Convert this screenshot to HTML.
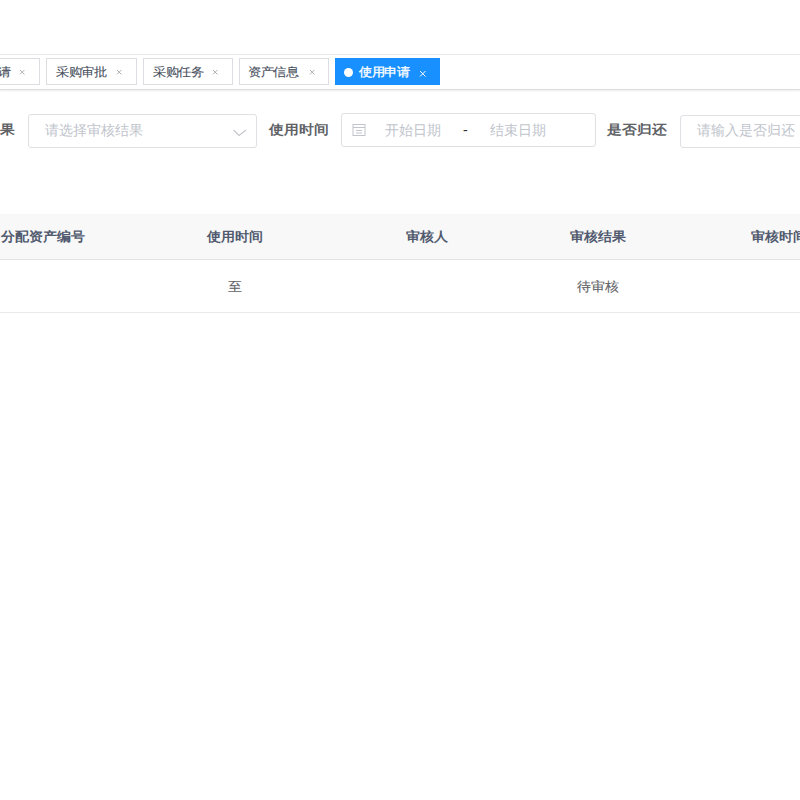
<!DOCTYPE html>
<html><head><meta charset="utf-8">
<style>
html,body{margin:0;padding:0;width:800px;height:800px;overflow:hidden;background:#fff;font-family:"Liberation Sans",sans-serif;}
.abs{position:absolute;}
#tagsbar{position:absolute;left:0;top:53.5px;width:800px;height:36.5px;background:#fff;border-top:1.5px solid #e9e9ea;border-bottom:1px solid #dcdde0;box-shadow:0 1px 2px 0 rgba(0,0,0,.08);box-sizing:border-box;}
.tag{position:absolute;top:57.5px;height:27px;box-sizing:border-box;border:1px solid #dddee2;background:#fff;color:#495060;font-size:13px;line-height:25px;white-space:nowrap;}
.tag .t{position:absolute;top:0.3px;-webkit-text-stroke:0.12px #495060;transform:scale(0.98,0.89);transform-origin:0 50%;}
.tag.active{background:#1890ff;border-color:#1890ff;color:#fff;}
.tag.active .t{-webkit-text-stroke:0.35px #fff;}
.dot{position:absolute;width:8px;height:8px;border-radius:50%;background:#fff;}
.label{position:absolute;font-size:15px;font-weight:bold;color:#606266;line-height:20px;white-space:nowrap;transform:scaleY(0.88);transform-origin:0 50%;}
.inp{position:absolute;box-sizing:border-box;border:1px solid #dfe0e4;border-radius:3px;background:#fff;}
.ph{position:absolute;font-size:14px;color:#c0c4cc;line-height:20px;white-space:nowrap;}
#thead{position:absolute;left:0;top:213.5px;width:800px;height:46.5px;background:#f8f8f9;border-bottom:1px solid #e2e3e5;box-sizing:border-box;}
#row{position:absolute;left:0;top:260px;width:800px;height:52.5px;border-bottom:1px solid #e8e9eb;box-sizing:border-box;}
.th{position:absolute;font-size:14px;font-weight:bold;color:#515a6e;line-height:20px;white-space:nowrap;transform:translateX(-50%) scaleY(0.93);}
.td{position:absolute;font-size:14px;color:#606266;-webkit-text-stroke:0.12px #606266;line-height:20px;white-space:nowrap;transform:translateX(-50%) scaleY(0.93);}
</style></head><body><div id="wrap" style="position:absolute;left:0;top:0;width:800px;height:800px">
<div id="tagsbar"></div>

<div class="tag" style="left:-40px;width:80px"><span class="t" style="left:37px">请</span></div>
<div class="tag" style="left:46px;width:91px"><span class="t" style="left:9px">采购审批</span></div>
<div class="tag" style="left:143px;width:90px"><span class="t" style="left:9px">采购任务</span></div>
<div class="tag" style="left:239px;width:90px"><span class="t" style="left:8px">资产信息</span></div>
<div class="tag active" style="left:335px;width:105px"><span class="dot" style="left:8px;top:9.5px;width:9px;height:9px"></span><span class="t" style="left:23px">使用申请</span></div>


<svg class="abs" style="left:19.3px;top:69.0px" width="6.4" height="6.4" viewBox="0 0 6.4 6.4"><path d="M1 1L5.4 5.4M5.4 1L1 5.4" stroke="#a3a6ad" stroke-width="0.9" fill="none"/></svg><svg class="abs" style="left:116.3px;top:69.3px" width="6.4" height="6.4" viewBox="0 0 6.4 6.4"><path d="M1 1L5.4 5.4M5.4 1L1 5.4" stroke="#a3a6ad" stroke-width="0.9" fill="none"/></svg><svg class="abs" style="left:212.3px;top:69.3px" width="6.4" height="6.4" viewBox="0 0 6.4 6.4"><path d="M1 1L5.4 5.4M5.4 1L1 5.4" stroke="#a3a6ad" stroke-width="0.9" fill="none"/></svg><svg class="abs" style="left:308.5px;top:69.3px" width="6.4" height="6.4" viewBox="0 0 6.4 6.4"><path d="M1 1L5.4 5.4M5.4 1L1 5.4" stroke="#a3a6ad" stroke-width="0.9" fill="none"/></svg><svg class="abs" style="left:419px;top:69.7px" width="7.5" height="7.5" viewBox="0 0 7.5 7.5"><path d="M1 1L6.5 6.5M6.5 1L1 6.5" stroke="#ffffff" stroke-width="1" fill="none"/></svg>
<div class="label" style="left:0px;top:120.1px">果</div>
<div class="inp" style="left:28px;top:114px;width:229px;height:33.5px"></div>
<div class="ph" style="left:45px;top:120px">请选择审核结果</div>
<svg class="abs" style="left:232.5px;top:129px" width="14" height="8" viewBox="0 0 14 8"><path d="M0.6 1 L6 6.4 L13 1" fill="none" stroke="#c3c5ca" stroke-width="1.1"/></svg>

<div class="label" style="left:268.5px;top:120.1px">使用时间</div>
<div class="inp" style="left:340.5px;top:113px;width:255px;height:34px"></div>
<svg class="abs" style="left:352px;top:122.5px" width="14" height="13" viewBox="0 0 14 13"><rect x="1" y="1.5" width="12" height="11" fill="none" stroke="#c0c4cc" stroke-width="1"/><line x1="1" y1="4.5" x2="13" y2="4.5" stroke="#c0c4cc"/><line x1="4" y1="7.5" x2="10" y2="7.5" stroke="#c0c4cc"/><line x1="4" y1="10" x2="10" y2="10" stroke="#c0c4cc"/></svg>
<div class="ph" style="left:385px;top:120px">开始日期</div>
<div class="abs" style="left:463px;top:120px;font-size:14px;line-height:20px;color:#303133">-</div>
<div class="ph" style="left:490px;top:120px">结束日期</div>

<div class="label" style="left:607px;top:120.1px">是否归还</div>
<div class="inp" style="left:680px;top:114.5px;width:200px;height:33px"></div>
<div class="ph" style="left:697px;top:120px">请输入是否归还</div>

<div id="thead"></div>
<div id="row"></div>
<div class="th" style="left:43px;top:226px">分配资产编号</div>
<div class="th" style="left:235px;top:226px">使用时间</div>
<div class="th" style="left:427px;top:226px">审核人</div>
<div class="th" style="left:598px;top:226px">审核结果</div>
<div class="th" style="left:779px;top:226px">审核时间</div>
<div class="td" style="left:235px;top:276px">至</div>
<div class="td" style="left:598px;top:276px">待审核</div>
</div></body></html>
